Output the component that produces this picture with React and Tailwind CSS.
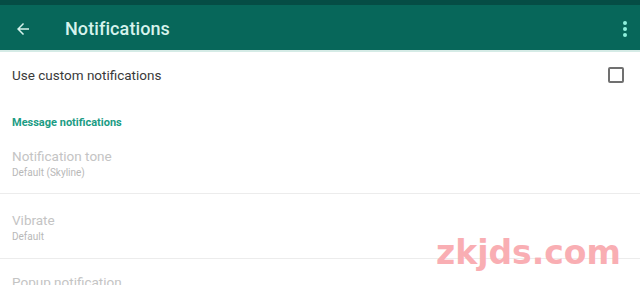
import React from 'react';

export default function App() {
  return (
    <div className="relative w-[640px] h-[285px] overflow-hidden bg-white" style={{ fontFamily: 'Roboto, "Noto Sans", sans-serif' }}>
      {/* Toolbar */}
      <div className="h-[5px] bg-[#054d45]" />
      <div className="h-[45px] bg-[#07675a] flex items-center pt-[2px] pl-[14px] pr-[10px]">
        <svg width="18" height="18" viewBox="0 0 24 24" className="text-[#d6f3ec]">
          <path d="M20 11H7.8l5.6-5.6L12 4l-8 8 8 8 1.4-1.4L7.8 13H20v-2z" fill="currentColor" />
        </svg>
        <h1 className="ml-[33px] text-[18px] font-medium text-[#d6f3ec] tracking-[0.1px]">Notifications</h1>
        <div className="ml-auto flex flex-col gap-[2px] items-center pr-[3px]">
          <span className="w-[4px] h-[4px] rounded-full bg-[#8ef0dc]" />
          <span className="w-[4px] h-[4px] rounded-full bg-[#8ef0dc]" />
          <span className="w-[4px] h-[4px] rounded-full bg-[#8ef0dc]" />
        </div>
      </div>
      <div className="h-[2px] bg-[#d5ebe6]" />

      {/* Use custom notifications */}
      <div className="h-[46px] flex items-center pl-[12px] pr-[16px]">
        <span className="text-[13.5px] text-[#3a3a3a]">Use custom notifications</span>
        <span className="ml-auto w-[16px] h-[16px] border-2 border-[#707070] rounded-[2px]" />
      </div>

      {/* Section header */}
      <div className="pl-[12px] pt-[17px] text-[11px] font-bold text-[#1b9c84]">Message notifications</div>

      {/* Notification tone */}
      <div className="pl-[12px] pt-[16px] pb-[13px] border-b border-[#ececec]">
        <div className="text-[13.5px] text-[#c4c4c4] leading-[16px]">Notification tone</div>
        <div className="text-[10px] text-[#b8b8b8] leading-[14px] mt-[2px]">Default (Skyline)</div>
      </div>

      {/* Vibrate */}
      <div className="pl-[12px] pt-[18px] pb-[14px] border-b border-[#ececec]">
        <div className="text-[13.5px] text-[#c4c4c4] leading-[16px]">Vibrate</div>
        <div className="text-[10px] text-[#b8b8b8] leading-[14px] mt-[2px]">Default</div>
      </div>

      {/* Popup notification */}
      <div className="pl-[12px] pt-[15px]">
        <div className="text-[13.5px] text-[#c4c4c4] leading-[16px]">Popup notification</div>
      </div>

      {/* Watermark */}
      <div className="absolute left-[436px] top-[236px] text-[33px] font-bold text-[#f9aeb3] leading-none" style={{ fontFamily: '"DejaVu Sans", sans-serif' }}>
        zkjds.com
      </div>
    </div>
  );
}
